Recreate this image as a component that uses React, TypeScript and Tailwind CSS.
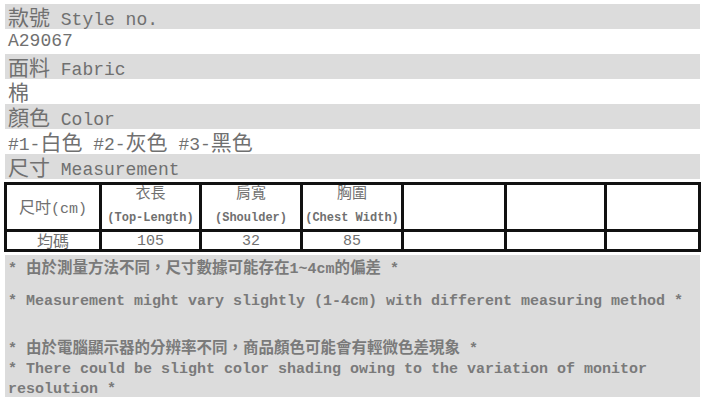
const mono = "font-['Liberation_Mono','Noto_Sans_CJK_TC',monospace]";

function C({ children }: { children: React.ReactNode }) {
  return <span className="font-['Noto_Sans_CJK_TC',sans-serif] text-[21px] leading-none">{children}</span>;
}

function N({ children }: { children: React.ReactNode }) {
  return <span className="font-['Noto_Sans_CJK_TC',sans-serif] text-[15.5px] leading-none">{children}</span>;
}

const rows: { label: React.ReactNode; gray: boolean }[] = [
  { label: <><C>款號</C> Style no.</>, gray: true },
  { label: <>A29067</>, gray: false },
  { label: <><C>面料</C> Fabric</>, gray: true },
  { label: <><C>棉</C></>, gray: false },
  { label: <><C>顏色</C> Color</>, gray: true },
  { label: <>#1-<C>白色</C> #2-<C>灰色</C> #3-<C>黑色</C></>, gray: false },
  { label: <><C>尺寸</C> Measurement</>, gray: true },
];

const cols = [
  { w: 'w-[95px]', zh: '', en: '', v: '均碼' },
  { w: 'w-[100px]', zh: '衣長', en: '(Top-Length)', v: '105' },
  { w: 'w-[101px]', zh: '肩寬', en: '(Shoulder)', v: '32' },
  { w: 'w-[101px]', zh: '胸圍', en: '(Chest Width)', v: '85' },
  { w: 'w-[103px]', zh: '', en: '', v: '' },
  { w: 'w-[100px]', zh: '', en: '', v: '' },
  { w: 'w-[94px]', zh: '', en: '', v: '' },
];

export default function App() {
  return (
    <div className={`w-[706px] h-[405px] bg-white text-[#707070] ${mono} overflow-hidden`}>
      <div className="pt-[4px]">
        {rows.map((r, i) => (
          <div
            key={i}
            className={`ml-[5px] w-[695px] h-[25px] pl-[3px] pt-[2px] text-[18px] leading-[21px] whitespace-nowrap ${r.gray ? 'bg-[#dcdcdc]' : ''}`}
          >
            {r.label}
          </div>
        ))}
      </div>

      {/* size table */}
      <div className="mt-[3px] ml-[4px] flex border-l-[3px] border-t-[3px] border-[#111] w-[697px]">
        {cols.map((c, i) => (
          <div key={i} className={`${c.w} flex flex-col`}>
            <div className="h-[47px] border-r-[3px] border-b-[3px] border-[#111] flex flex-col items-center justify-center">
              {i === 0 ? (
                <div className="text-[15px] whitespace-nowrap pt-[2px]">
                  <span className="font-['Noto_Sans_CJK_TC',sans-serif] text-[16px]">尺吋</span>(cm)
                </div>
              ) : c.zh ? (
                <>
                  <div className="font-['Noto_Sans_CJK_TC',sans-serif] text-[15px] leading-[18px] -mt-[6px]">{c.zh}</div>
                  <div className="text-[12px] font-bold leading-[14px] mt-[10px] whitespace-nowrap">{c.en}</div>
                </>
              ) : null}
            </div>
            <div className="h-[20px] border-r-[3px] border-b-[3px] border-[#111] text-center text-[15px] leading-[19px]">
              {i === 0 ? (
                <span className="font-['Noto_Sans_CJK_TC',sans-serif] text-[16px] leading-none">{c.v}</span>
              ) : (
                c.v
              )}
            </div>
          </div>
        ))}
      </div>

      {/* notes */}
      <div className="mt-[3px] ml-[5px] w-[695px] h-[142px] bg-[#dcdcdc] pl-[3px] pt-[4px] text-[15px] font-bold text-[#7a7a7a]">
        <div className="leading-[21px] whitespace-nowrap">
          * <N>由於測量方法不同，尺寸數據可能存在</N>1~4cm<N>的偏差</N> *
        </div>
        <div className="mt-[11px] leading-[21px] whitespace-nowrap">
          * Measurement might vary slightly (1-4cm) with different measuring method *
        </div>
        <div className="mt-[27px] leading-[21px] whitespace-nowrap">
          * <N>由於電腦顯示器的分辨率不同，商品顏色可能會有輕微色差現象</N> *
        </div>
        <div className="leading-[20px] whitespace-nowrap">
          * There could be slight color shading owing to the variation of monitor
          <br />
          resolution *
        </div>
      </div>
    </div>
  );
}
